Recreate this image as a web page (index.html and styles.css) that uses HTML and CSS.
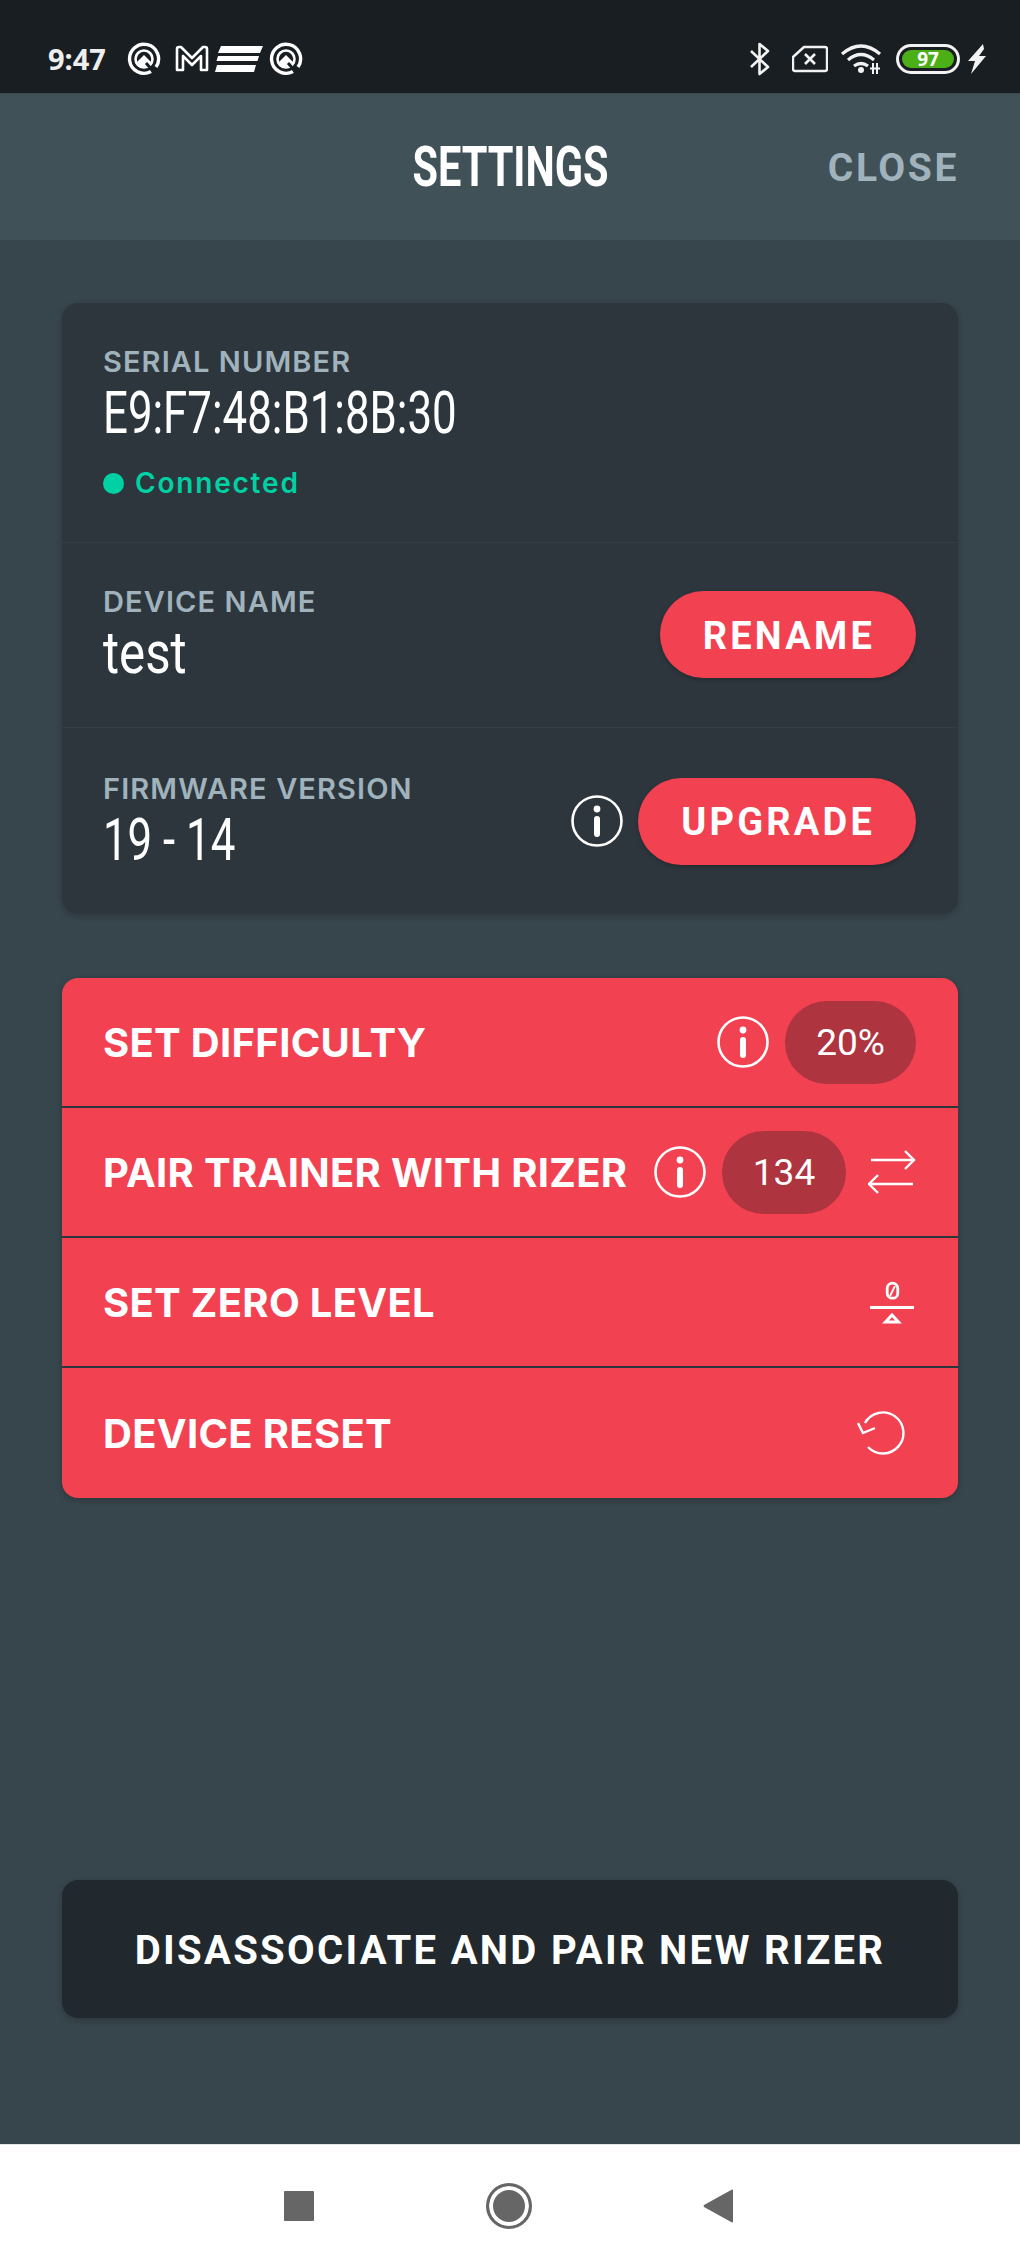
FILE: index.html
```html
<!DOCTYPE html>
<html lang="en">
<head>
    <meta charset="UTF-8">
    <meta name="viewport" content="width=device-width, initial-scale=1.0">
    <title>Settings</title>
    <link rel="stylesheet" href="styles.css">
</head>
<body>
    <div class="phone">
        <!-- Android status bar -->
        <div class="status-bar">
            <div class="status-left">
                <span class="clock">9:47</span>
                <svg class="st-icon" width="34" height="34" viewBox="0 0 34 34"><path d="M24 29.500A14.500 14.500 0 1 1 29 25" fill="none" stroke="#fff" stroke-width="3.400"/><circle cx="17" cy="17" r="8.500" fill="none" stroke="#fff" stroke-width="2.600"/><path d="M10 20l7-7 7 7-3 4h-8z" fill="#fff"/><path d="M19 21l7 8" stroke="#181e22" stroke-width="3"/></svg>
                <svg class="st-icon st-gap" width="34" height="28" viewBox="0 0 34 28"><path d="M2 25V4q0-2 2-2h2l11 11L28 2h2q2 0 2 2v21h-6V11l-9 9-9-9v14z" fill="none" stroke="#fff" stroke-width="2.600" stroke-linejoin="round"/></svg>
                <svg class="st-icon" width="48" height="26" viewBox="0 0 48 26"><path d="M6 0h42l-3 7H3zM3 10h41l-1.500 5H1.500zM2 19h39l-2 7H0z" fill="#fff"/></svg>
                <svg class="st-icon" width="34" height="34" viewBox="0 0 34 34"><path d="M24 29.500A14.500 14.500 0 1 1 29 25" fill="none" stroke="#fff" stroke-width="3.400"/><circle cx="17" cy="17" r="8.500" fill="none" stroke="#fff" stroke-width="2.600"/><path d="M10 20l7-7 7 7-3 4h-8z" fill="#fff"/><path d="M19 21l7 8" stroke="#181e22" stroke-width="3"/></svg>
            </div>
            <div class="status-right">
                <svg width="22" height="34" viewBox="0 0 22 34"><path d="M2 9l17 16-8.500 7V2L19 9 2 25" fill="none" stroke="#f2f2f2" stroke-width="2.600" stroke-linejoin="round"/></svg>
                <svg class="st-sim" width="36" height="28" viewBox="0 0 36 28"><path d="M12 2h21q2 0 2 2v20q0 2-2 2H3q-2 0-2-2V12z" fill="none" stroke="#f2f2f2" stroke-width="2.400" stroke-linejoin="round"/><path d="M13 9l10 10M23 9L13 19" stroke="#f2f2f2" stroke-width="2.600"/></svg>
                <svg class="st-wifi" width="42" height="32" viewBox="0 0 42 32"><path d="M2 11q19-16 38 0M8 17q13-11 26 0M14 23q7-5 14 0" fill="none" stroke="#f2f2f2" stroke-width="3.200"/><circle cx="21" cy="27" r="3" fill="#f2f2f2"/><path d="M33 20v11M37 20v11M30 25.500h10" stroke="#f2f2f2" stroke-width="2"/></svg>
                <span class="battery"><span class="battery-fill">97</span></span>
                <svg width="18" height="30" viewBox="0 0 18 30"><path d="M15 0L0 17h7L3 30l15-18h-7l5-7z" fill="#f2f2f2"/></svg>
            </div>
        </div>

        <header class="top-bar">
            <h1 class="page-title">SETTINGS</h1>
            <a href="#" class="close-link">CLOSE</a>
        </header>

        <main class="content">
            <section class="card info-card">
                <div class="info-row serial-row">
                    <div class="info-text">
                        <div class="info-label">SERIAL NUMBER</div>
                        <div class="info-value">E9:F7:48:B1:8B:30</div>
                        <div class="status-line"><span class="status-dot"></span>Connected</div>
                    </div>
                </div>
                <div class="info-row">
                    <div class="info-text">
                        <div class="info-label">DEVICE NAME</div>
                        <div class="info-value value-short">test</div>
                    </div>
                    <a href="#" class="pill-button">RENAME</a>
                </div>
                <div class="info-row">
                    <div class="info-text">
                        <div class="info-label">FIRMWARE VERSION</div>
                        <div class="info-value">19 - 14</div>
                    </div>
                    <div class="row-actions">
                        <svg class="info-icon" viewBox="0 0 52 52"><circle cx="26" cy="26" r="24.500" fill="none" stroke="#fff" stroke-width="2.600"/><circle cx="26" cy="14" r="3.400" fill="#fff"/><rect x="23" y="21" width="6" height="21" rx="3" fill="#fff"/></svg>
                        <a href="#" class="pill-button">UPGRADE</a>
                    </div>
                </div>
            </section>

            <section class="card action-card">
                <div class="action-row">
                    <span class="action-label">SET DIFFICULTY</span>
                    <div class="row-actions">
                        <svg class="info-icon" viewBox="0 0 52 52"><circle cx="26" cy="26" r="24.500" fill="none" stroke="#fff" stroke-width="2.600"/><circle cx="26" cy="14" r="3.400" fill="#fff"/><rect x="23" y="21" width="6" height="21" rx="3" fill="#fff"/></svg>
                        <span class="value-pill pill-wide">20%</span>
                    </div>
                </div>
                <div class="action-row">
                    <span class="action-label">PAIR TRAINER WITH RIZER</span>
                    <div class="row-actions">
                        <svg class="info-icon" viewBox="0 0 52 52"><circle cx="26" cy="26" r="24.500" fill="none" stroke="#fff" stroke-width="2.600"/><circle cx="26" cy="14" r="3.400" fill="#fff"/><rect x="23" y="21" width="6" height="21" rx="3" fill="#fff"/></svg>
                        <span class="value-pill">134</span>
                        <svg class="swap-icon" width="48" height="44" viewBox="0 -1 48 44"><path d="M3 9H46M37 0l9 9-9 9M45 33H1M10 24l-9 9 9 9" fill="none" stroke="#fff" stroke-width="2.400"/></svg>
                    </div>
                </div>
                <div class="action-row">
                    <span class="action-label">SET ZERO LEVEL</span>
                    <svg class="zero-icon" width="44" height="46" viewBox="0 -3 44 46"><rect x="17.200" y="1.200" width="10.600" height="15" rx="5.300" fill="none" stroke="#fff" stroke-width="2.800"/><path d="M20 14l5-10" stroke="#fff" stroke-width="1.800"/><rect x="0" y="24" width="44" height="3" fill="#fff"/><path d="M22 33l6.500 7h-13z" fill="none" stroke="#fff" stroke-width="3"/></svg>
                </div>
                <div class="action-row">
                    <span class="action-label">DEVICE RESET</span>
                    <svg class="reset-icon" width="48" height="44" viewBox="0 0 48 44"><path d="M8 12A20.500 20.500 0 1 1 11 36" fill="none" stroke="#fff" stroke-width="2.400"/><path d="M1 12l5 10 12-5" fill="none" stroke="#fff" stroke-width="2.400"/></svg>
                </div>
            </section>

            <a href="#" class="card bottom-button">DISASSOCIATE AND PAIR NEW RIZER</a>
        </main>

        <!-- Android nav bar -->
        <nav class="nav-bar">
            <span class="nav-square"></span>
            <span class="nav-home"></span>
            <svg class="nav-back" width="30" height="34" viewBox="0 0 30 34"><path d="M29 0.500q1 0 1 1v31q0 1-1 1L1 18q-1-1 0-2z" fill="#666"/></svg>
        </nav>
    </div>
</body>
</html>
```

FILE: styles.css
```css
* {
    box-sizing: border-box;
}

body {
    font-family: Roboto, "Liberation Sans", sans-serif;
    margin: 0;
    padding: 0;
    color: white;
}

a {
    color: inherit;
    text-decoration: none;
}

.phone {
    width: 1020px;
    height: 2267px;
    display: flex;
    flex-direction: column;
    background-color: #37454c;
    overflow: hidden;
}

/* status bar */
.status-bar {
    height: 94px;
    flex-shrink: 0;
    background-color: #181e22;
    display: flex;
    justify-content: space-between;
    align-items: center;
    padding: 24px 34px 0 48px;
    border-bottom: 1px solid #3a464c;
}

.status-left, .status-right {
    display: flex;
    align-items: center;
}

.clock {
    font-family: "Noto Sans", sans-serif;
    font-size: 29px;
    font-weight: 700;
    color: #eee;
    margin-right: 15px;
    width: 64px;
}

.st-icon {
    margin-right: 6px;
}

.st-gap {
    margin-left: 8px;
}

.status-right svg {
    flex-shrink: 0;
}

.st-sim {
    margin-left: 21px;
}

.st-wifi {
    margin-left: 12px;
}

.battery {
    width: 64px;
    height: 30px;
    margin-left: 14px;
    margin-right: 8px;
    border: 3px solid #f2f2f2;
    border-radius: 15px;
    padding: 3px;
    background-color: #181e22;
    display: flex;
}

.battery-fill {
    flex: 1;
    background-color: #4caf17;
    border-radius: 9px;
    font-family: "Open Sans", sans-serif;
    font-size: 19px;
    font-weight: 700;
    line-height: 18px;
    text-align: center;
}

/* header */
.top-bar {
    height: 146px;
    flex-shrink: 0;
    background-color: #415158;
    display: flex;
    align-items: center;
    justify-content: center;
    position: relative;
}

.page-title {
    margin: 0;
    font-size: 56px;
    font-weight: 700;
    transform: scaleX(.74);
}

.close-link {
    position: absolute;
    right: 62px;
    top: 51px;
    font-size: 39px;
    line-height: 46px;
    font-weight: 700;
    letter-spacing: 2.600px;
    margin-right: -1px;
    color: #a0b3bc;
}

/* content */
.content {
    flex: 1;
    padding: 63px 62px 0;
    display: flex;
    flex-direction: column;
}

.card {
    border-radius: 16px;
    box-shadow: 0 2px 6px rgba(0, 0, 0, .2);
}

.info-card {
    background-color: #2c363c;
    height: 611px;
    display: flex;
    flex-direction: column;
}

.info-row {
    height: 186px;
    display: flex;
    justify-content: space-between;
    align-items: center;
    padding: 0 42px 0 41px;
    border-bottom: 1px solid #323f45;
}

.info-row:last-child {
    border-bottom: none;
}

.serial-row {
    height: 240px;
    align-items: flex-start;
    padding-top: 42px;
}

.info-label {
    font-family: Inter, Roboto, sans-serif;
    font-size: 29px;
    line-height: 34px;
    font-weight: 600;
    letter-spacing: 1.100px;
    color: #a0b3bc;
}

.info-value {
    font-size: 60px;
    line-height: 62px;
    margin-top: 3px;
    font-weight: 400;
    white-space: nowrap;
    transform: scaleX(.73);
    transform-origin: left center;
}

.value-short {
    transform: scaleX(.82);
}

.status-line {
    display: flex;
    align-items: center;
    margin-top: 22px;
    font-family: Inter, Roboto, sans-serif;
    font-size: 28px;
    line-height: 34px;
    font-weight: 600;
    letter-spacing: 1.800px;
    color: #00d1a4;
}

.status-dot {
    width: 21px;
    height: 21px;
    border-radius: 50%;
    background-color: #00d1a4;
    margin-right: 11px;
}

.row-actions {
    display: flex;
    align-items: center;
}

.info-icon {
    width: 52px;
    height: 52px;
    flex-shrink: 0;
}

.pill-button {
    height: 87px;
    padding: 2px 41px 0 43px;
    margin-left: 15px;
    border-radius: 44px;
    background-color: #f24151;
    display: flex;
    align-items: center;
    font-size: 38px;
    font-weight: 700;
    letter-spacing: 3.200px;
    box-shadow: 0 2px 4px rgba(0, 0, 0, .2);
}

.action-card {
    margin-top: 64px;
    background-color: #f24151;
    height: 520px;
    overflow: hidden;
}

.action-row {
    height: 130px;
    display: flex;
    justify-content: space-between;
    align-items: center;
    padding: 0 42px 0 41px;
    border-bottom: 2px solid #2c363c;
}

.action-row:last-child {
    border-bottom: none;
}

.action-label {
    font-family: Inter, Roboto, sans-serif;
    font-size: 40px;
    font-weight: 700;
    letter-spacing: .3px;
    white-space: nowrap;
}

.value-pill {
    width: 124px;
    height: 83px;
    margin-left: 16px;
    border-radius: 42px;
    background-color: #ae3440;
    display: flex;
    align-items: center;
    justify-content: center;
    font-size: 37px;
}

.pill-wide {
    width: 131px;
}

.swap-icon {
    margin-left: 22px;
}

.zero-icon {
    margin-right: 2px;
}

.reset-icon {
    margin-right: 11px;
}

.bottom-button {
    margin-top: 382px;
    height: 138px;
    padding-top: 3px;
    background-color: #21292e;
    display: flex;
    align-items: center;
    justify-content: center;
    font-size: 40px;
    font-weight: 700;
    letter-spacing: 2.300px;
}

/* nav bar */
.nav-bar {
    height: 123px;
    flex-shrink: 0;
    background-color: white;
    border-top: 1px solid #dfe5e5;
    display: flex;
    align-items: center;
    padding-left: 284px;
}

.nav-square {
    width: 30px;
    height: 30px;
    background-color: #666;
    border-radius: 1px;
}

.nav-home {
    width: 46px;
    height: 46px;
    margin-left: 172px;
    border-radius: 50%;
    background-color: #666;
    border: 3px solid #666;
    box-shadow: inset 0 0 0 4px white;
}

.nav-back {
    margin-left: 171px;
}
```
